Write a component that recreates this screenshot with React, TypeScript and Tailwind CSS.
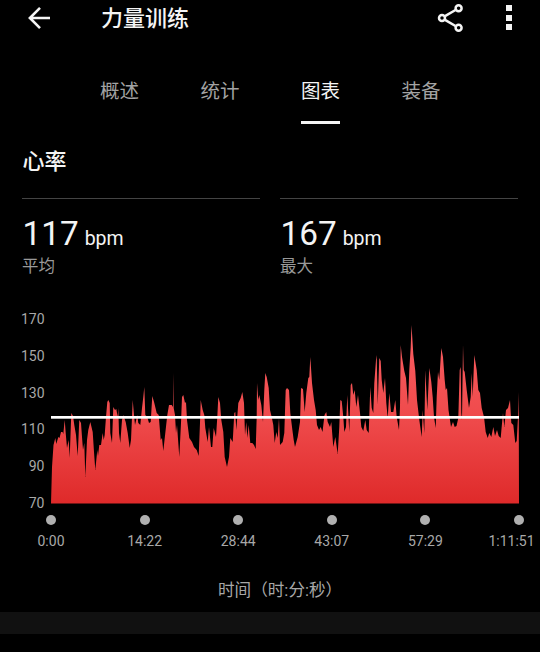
const TABS = ['概述', '统计', '图表', '装备'];
const ACTIVE_TAB = '图表';

const STATS = [
  { value: '117', unit: 'bpm', label: '平均' },
  { value: '167', unit: 'bpm', label: '最大' },
];

const Y_TICKS = [170, 150, 130, 110, 90, 70];
const X_TICKS = ['0:00', '14:22', '28:44', '43:07', '57:29', '1:11:51'];

// heart rate outline in chart units, 503.5 is the 70 bpm base line
const SAMPLES = `51,503.5 52,467 53.5,445 55.3,438 56.3,444 58.3,437 59.5,438 61,432 62.6,432 63.3,434 64.7,420 65.7,433 67,448 68.7,440 69.7,458 71.3,413 73,416 74.3,425 76,435 77.7,456 79.3,420 81,423 82,437 83,450
84.3,443 85.3,477 87,440 88.3,430 90.3,422 92.7,432 94,452 95.3,470 97.3,450 98,456 99.3,445 101,445 102.7,433 103.7,440 104.7,435 106,417 107.3,402 108.3,400 109.7,403 110.3,433 112,443 113.3,407 115,410 116.3,409
117.7,417 118.3,408 119,433 120.3,443 122,420 123.3,415 125.7,422 127.7,433 129.7,448 131,440 132,417 132.7,400 134,415 135,425 137.3,415 138.3,423 140.3,425 142,408 143.3,397 144.3,387 145.3,415 147.3,417 149,423
150.7,422 152.3,396 154.3,403 156.7,413 158.7,415 160.7,440 162,438 163.3,451 165.3,433 167.3,415 169,405 171.7,405 173,407 173.3,373 173.7,408 175,415 176,433 177,425 179.3,457 181,423 182,397 183.3,395 185,403
186,402 187,420 189.3,438 192,442 194,447 196.7,450 198.7,456 200,423 200.7,400 202.7,410 204.3,415 205.3,428 207.7,442 209,427 211,447 212.3,447 213.7,428 216,437 217.3,417 218.3,397 220,403 221.3,420 223.3,432
224.7,457 227,467 229,457 230.3,438 232.7,442 234.3,413 235.3,412 236.3,430 238.3,403 240.7,398 242.3,392 244,403 245,435 246.3,422 247.3,438 248.7,425 250.3,443 252.3,443 254,445 255.7,449 256.7,417 257,383
258.3,400 259.3,395 261.3,405 263,422 264.3,390 265.3,373 266.7,377 268.7,388 270,410 271.7,417 273.3,425 274.7,443 276.3,432 277.7,438 279,418 280,445 282.7,442 284.3,433 285.7,390 287,388 289,390 290.3,413
292,427 293.7,440 295,447 297.7,437 300,422 301,388 303,389 304.7,412 306.3,393 308.3,378 309.3,377 310.3,357 312,383 314,400 315.7,410 317,425 319,430 320.7,427 322.5,432 324.5,415 326.3,412 327.7,422 330,427
331.3,422 333.3,447 335.3,437 337.7,454 339.3,427 340.3,400 341.7,401 343.3,417 344.3,432 346,427 347.3,395 348.3,413 349.3,432 350.7,385 352,383 353.3,395 354.7,390 356.3,407 358,395 360,413 361.3,427 363.3,431
365.3,420 366.7,430 368.7,433 370.3,387 371.7,408 373.3,413 374.3,383 376,360 376.7,355 377.7,405 379.3,358 380.7,361 381.7,380 383.3,393 385,378 386.3,403 387.7,418 389.3,393 391,412 393.3,412 395.3,400
396.7,417 399,430 400,407 400.7,345 402,357 404.3,371 406,378 408,405 409.3,370 410.7,347 411.5,325 413.3,354 415.3,371 417,400 419.3,420 421.7,437 422.7,410 424.3,433 425.3,370 427.3,410 429.3,368 431.3,382
432.7,397 434,417 435.7,428 436.7,397 438,372 439.3,380 441.3,348 443,357 444.7,380 445.7,390 447,388 448.5,410 451,427 453,422 454.7,427 456.5,426 458.3,418 459.7,370 460.7,367 461.3,413 462,420 463,345
463.7,370 464.7,372 466.7,390 469,408 470.7,397 471.7,373 472.7,397 474.3,355 476.7,370 478.3,390 480,393 481.7,408 484,417 485.7,432 487.7,438 489.3,433 491.3,437 493.3,427 495,436 497,430 498.7,436 500.7,438
502.3,420 503,413 504.3,427 506,410 508,408 510,400 511.3,423 513.3,425 515.3,443 516.7,441 518,417 518.7,392 519,503.5`;

function BackIcon() {
  return (
    <svg width="24" height="24" viewBox="0 0 24 24" fill="none" stroke="#f4f4f4" strokeWidth="2.6">
      <path d="M23 12 H3 M13 1.9 L2.9 12 L13 22.1" />
    </svg>
  );
}

function ShareIcon() {
  return (
    <svg width="26" height="30" viewBox="0 0 26 30" fill="none" stroke="#f4f4f4" strokeWidth="2.5">
      <path d="M8 13.2 L18.5 7 M8 16.8 L18.5 23" strokeWidth="2.5" />
      <circle cx="5" cy="15" r="3" />
      <circle cx="21.6" cy="5.3" r="3" />
      <circle cx="21.6" cy="24.7" r="3" />
    </svg>
  );
}

function MoreIcon() {
  return (
    <div className="flex flex-col gap-[3.5px]">
      <span className="size-[6px] bg-[#f4f4f4]" />
      <span className="size-[6px] bg-[#f4f4f4]" />
      <span className="size-[6px] bg-[#f4f4f4]" />
    </div>
  );
}

function HeartRateChart() {
  return (
    <svg width="468" height="184" viewBox="51 319 468 184" className="block overflow-visible">
      <defs>
        <linearGradient id="hr" gradientUnits="userSpaceOnUse" x1="0" y1="325" x2="0" y2="503">
          <stop offset="0" stopColor="#fb5e62" />
          <stop offset="0.55" stopColor="#ee494a" />
          <stop offset="1" stopColor="#df2a2a" />
        </linearGradient>
      </defs>
      <polygon points={SAMPLES} fill="url(#hr)" />
      <rect x="51" y="416" width="468" height="2.7" fill="#ffffff" />
    </svg>
  );
}

export default function App() {
  return (
    <div className="flex h-[652px] w-[540px] flex-col overflow-hidden bg-black font-['Roboto','Noto_Sans_CJK_SC',sans-serif] text-[#f4f4f4]">
      <header className="flex h-[35px] shrink-0 items-center pr-[28px] pl-[27px]">
        <BackIcon />
        <h1 className="ml-[50px] pt-[2px] text-[22px] leading-none font-medium">力量训练</h1>
        <div className="ml-auto flex items-center gap-[43px]">
          <ShareIcon />
          <MoreIcon />
        </div>
      </header>

      <nav className="mt-[38px] flex h-[51px] shrink-0 gap-[61.5px] pl-[100px]">
        {TABS.map((tab) => (
          <div
            key={tab}
            className={`w-[39px] border-b-[3px] pt-[9px] text-[19.5px] leading-[20px] whitespace-nowrap ${
              tab === ACTIVE_TAB ? 'border-[#f4f4f4] text-[#f4f4f4]' : 'border-transparent text-[#a3a3a3]'
            }`}
          >
            {tab}
          </div>
        ))}
      </nav>

      <h2 className="mt-[26px] pl-[22.5px] text-[22px] leading-[24px] font-medium">心率</h2>

      <section className="mt-[24px] grid h-[80px] shrink-0 grid-cols-2 gap-[20px] pr-[22px] pl-[22px]">
        {STATS.map((stat) => (
          <div key={stat.label} className="border-t border-[#444444] pt-[17px]">
            <div className="flex items-baseline gap-[6px] pl-[0.5px] leading-[36px]">
              <span className="text-[33.3px]">{stat.value}</span>
              <span className="text-[19.5px]">{stat.unit}</span>
            </div>
            <div className="text-[16.5px] leading-[20px] text-[#999999]">{stat.label}</div>
          </div>
        ))}
      </section>

      <section className="mt-[41px] flex h-[184px] shrink-0">
        <div className="-my-[8px] flex w-[44.5px] flex-col justify-between text-right text-[14px] leading-[16px] text-[#a8a8a8]">
          {Y_TICKS.map((tick) => (
            <span key={tick}>{tick}</span>
          ))}
        </div>
        <div className="ml-[6.5px]">
          <HeartRateChart />
        </div>
      </section>

      <div className="mt-[11.5px] flex h-[36px] shrink-0 justify-between pr-[21px] pl-[51px]">
        {X_TICKS.map((tick, i) => (
          <div key={tick} className="flex w-0 flex-col items-center">
            <span className="size-[10px] shrink-0 rounded-full bg-[#b0b0b0]" />
            <span
              className={`mt-[8.5px] text-[14px] leading-[16px] whitespace-nowrap text-[#a8a8a8] ${
                i === X_TICKS.length - 1 ? '-ml-[15px]' : ''
              }`}
            >
              {tick}
            </span>
          </div>
        ))}
      </div>

      <div className="mt-[30.5px] pl-[218px] text-[16.6px] leading-[20px] whitespace-nowrap text-[#a8a8a8]">时间（时:分:秒）</div>

      <div className="mt-[10.5px] h-[22px] shrink-0 bg-[#111111]" />
    </div>
  );
}
